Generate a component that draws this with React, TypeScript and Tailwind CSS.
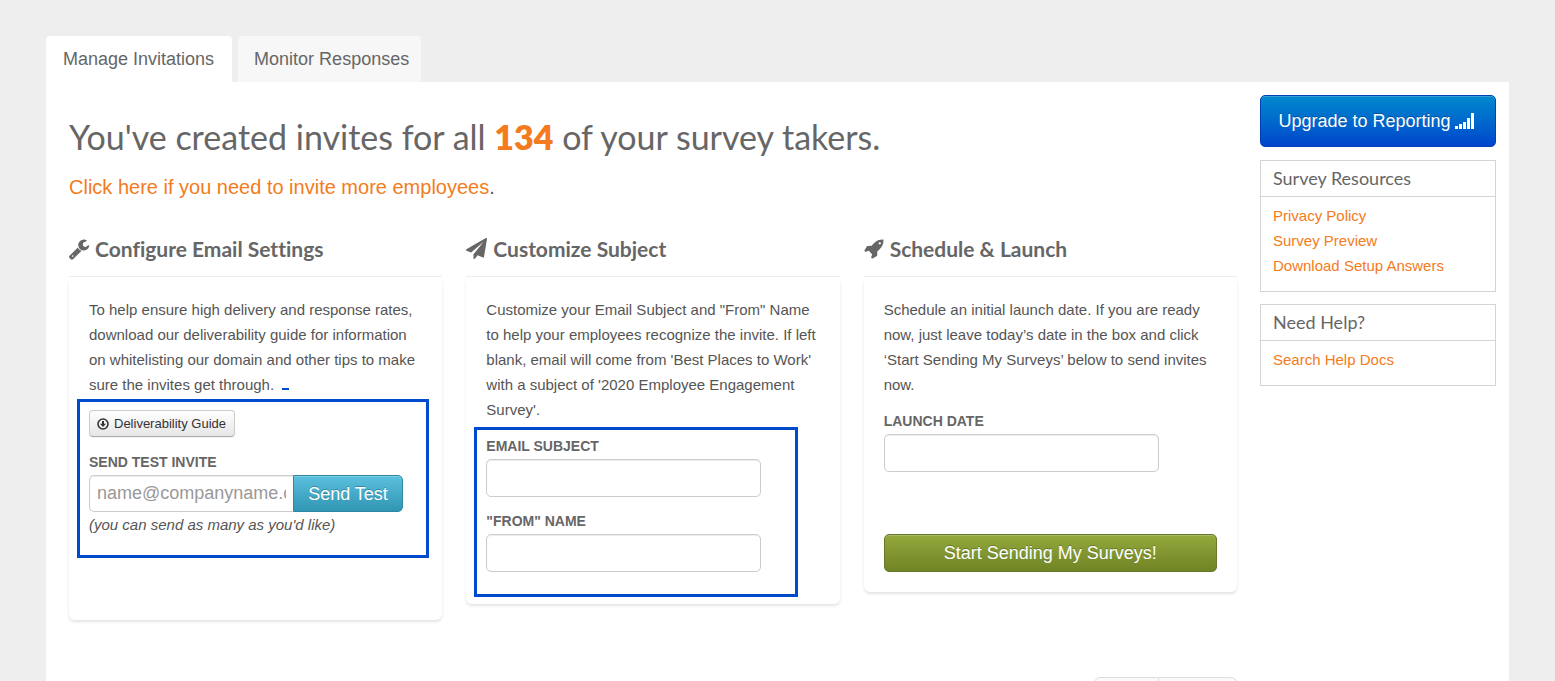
import type { ReactNode } from "react";

const sans = "font-['Liberation_Sans',Arial,sans-serif]";
const lato = "font-['Lato',sans-serif] [font-variant-ligatures:none]";

function Glyph({ d, className }: { d: string; className: string }) {
  return (
    <svg viewBox="0 0 1792 1792" fill="currentColor" aria-hidden="true" className={className}>
      <path d={d} />
    </svg>
  );
}

const WRENCH =
  "M448 1472q0-26-19-45t-45-19-45 19-19 45 19 45 45 19 45-19 19-45zm644-420l-682 682q-37 37-90 37-52 0-91-37l-106-108q-38-36-38-90 0-53 38-91l681-681q39 98 114.5 173.5t173.5 114.5zm634-435q0 39-23 106-47 134-164.5 217.5t-258.5 83.5q-185 0-316.5-131.5t-131.5-316.5 131.5-316.5 316.5-131.5q58 0 121.5 16.5t107.5 46.5q16 11 16 28t-16 28l-293 169v224l193 107q5-3 79-48.5t135.5-81 70.5-35.5q15 0 23.5 10t8.5 25z";
const PLANE =
  "M1764 11q33 24 27 64l-256 1536q-5 29-32 45-14 8-31 8-11 0-24-5l-453-185-242 295q-18 23-49 23-13 0-22-4-19-7-30.5-23.5t-11.5-36.5v-349l864-1059-1069 925-395-162q-37-14-40-55-2-40 32-59l1664-960q15-9 32-9 20 0 36 11z";
const ROCKET =
  "M1440 448q0-40-28-68t-68-28-68 28-28 68 28 68 68 28 68-28 28-68zm224-288q0 249-75.5 430.5t-253.5 360.5q-81 80-195 176l-20 379q-2 16-16 26l-384 224q-7 4-16 4-12 0-23-9l-64-64q-13-14-8-32l85-276-281-281-276 85q-3 1-9 1-14 0-23-9l-64-64q-17-19-5-39l224-384q10-14 26-16l379-20q96-114 176-195 188-187 358-258t431-71q14 0 24 9.5t10 22.5z";

function SignalIcon() {
  return (
    <svg viewBox="0 0 19 16" fill="currentColor" aria-hidden="true" className="h-4 w-[19px]">
      <rect x="0" y="13" width="3" height="3" />
      <rect x="4" y="11" width="3" height="5" />
      <rect x="8" y="9" width="3" height="7" />
      <rect x="12" y="5" width="3" height="11" />
      <rect x="16" y="0" width="3" height="16" />
    </svg>
  );
}

function CircleDownIcon() {
  return (
    <svg viewBox="0 0 12 12" aria-hidden="true" className="size-3">
      <circle cx="6" cy="6" r="5" fill="none" stroke="currentColor" strokeWidth="1.6" />
      <path d="M5 3h2v2.800h2L6 9 3 5.800h2z" fill="currentColor" />
    </svg>
  );
}

function Step({ icon, title, children }: { icon: ReactNode; title: string; children: ReactNode }) {
  return (
    <section>
      <h2 className={`${lato} flex h-[54px] items-center gap-[5px] border-b border-[#eee] pb-0.5 text-[21px] font-bold text-[#666]`}>
        {icon}
        {title}
      </h2>
      <div className="flow-root rounded-md px-5 pt-5 shadow-[0_2px_3px_rgba(0,0,0,0.11)]">{children}</div>
    </section>
  );
}

function Field({ id, label }: { id: string; label: string }) {
  return (
    <div>
      <FieldLabel id={id}>{label}</FieldLabel>
      <input
        id={id}
        type="text"
        className="block h-[38px] w-[275px] max-w-full rounded-[5px] border border-[#ccc] bg-white px-2 text-lg shadow-[inset_0_1px_1px_rgba(0,0,0,0.075)]"
      />
    </div>
  );
}

function FieldLabel({ id, children }: { id: string; children: ReactNode }) {
  return (
    <label htmlFor={id} className="block text-sm leading-[25px] font-bold text-[#666] uppercase">
      {children}
    </label>
  );
}

function SideBox({ title, links }: { title: string; links: string[] }) {
  return (
    <section className="border border-[#d4d4d4]">
      <h3 className={`${lato} h-9 border-b border-[#d4d4d4] px-3 text-lg leading-[34px] text-[#666]`}>{title}</h3>
      <ul className="px-3 pt-1.5 pb-[13px]">
        {links.map((l) => (
          <li key={l}>
            <a href="#" className="text-[#f47b20]">{l}</a>
          </li>
        ))}
      </ul>
    </section>
  );
}

export default function App() {
  return (
    <div className={`${sans} flex h-screen flex-col overflow-hidden bg-[#eee] px-[46px] pt-9 text-[15px] leading-[25px] text-[#555]`}>
      <nav className="flex h-[46px] shrink-0 gap-1.5 text-lg leading-[46px] text-[#666]">
        <a href="#" className="rounded-t bg-white pr-[18px] pl-[17px]">Manage Invitations</a>
        <a href="#" className="rounded-t bg-[#f7f7f7] pr-3 pl-4">Monitor Responses</a>
      </nav>
      <div className="flex flex-1 gap-[23px] bg-white pr-[13px] pl-[23px]">
        <main className="flex min-w-0 flex-1 flex-col">
          <h1 className={`${lato} pt-[31px] text-[34px] leading-[48px] text-[#666] [font-variant-ligatures:normal]`}>
            You've created invites for all <strong className="font-extrabold text-[#f47b20]">134</strong> of your survey takers.
          </h1>
          <p className="pt-[13px] pb-[23px] text-xl leading-[26px]">
            <a href="#" className="text-[#f47b20]">Click here if you need to invite more employees</a>.
          </p>
          <div className="grid h-[454px] shrink-0 grid-cols-3 items-start gap-6">
            <Step icon={<Glyph d={WRENCH} className="-ml-px size-[22px]" />} title="Configure Email Settings">
              <p>
                To help ensure high delivery and response rates, download our deliverability guide for information on
                whitelisting our domain and other tips to make sure the invites get through.
                <span className="ml-2 inline-block h-0.5 w-[7px] bg-[#004bcd]" />
              </p>
              <div className="mt-0.5 -mr-[7px] mb-[62px] -ml-3 h-[159px] border-3 border-[#004bcd] px-[9px] pt-2">
                <button className="flex h-[27px] items-center gap-[5px] rounded border border-[#ccc] border-b-[#a9a9a9] bg-linear-to-b from-white to-[#e6e6e6] px-[7px] pr-2 text-[13px] text-[#333] shadow-[0_1px_2px_rgba(0,0,0,0.05)]">
                  <CircleDownIcon />
                  Deliverability Guide
                </button>
                <div className="mt-[13px]">
                  <FieldLabel id="test-invite">Send Test Invite</FieldLabel>
                  <div className="flex">
                    <input
                      id="test-invite"
                      type="email"
                      placeholder="name@companyname.com"
                      className="h-[37px] w-[204px] min-w-0 rounded-l-[5px] border border-r-0 border-[#ccc] px-[7px] text-lg shadow-[inset_0_1px_1px_rgba(0,0,0,0.075)] placeholder:text-[#999]"
                    />
                    <button className="h-[37px] w-[110px] rounded-r-[5px] border border-[#2f87a3] bg-linear-to-b from-[#5bc0de] to-[#2f96b4] text-lg text-white shadow-[inset_0_1px_0_rgba(255,255,255,0.2)] text-shadow-[0_-1px_0_rgba(0,0,0,0.25)]">
                      Send Test
                    </button>
                  </div>
                  <em>(you can send as many as you'd like)</em>
                </div>
              </div>
            </Step>
            <Step icon={<Glyph d={PLANE} className="mr-px size-[21px]" />} title="Customize Subject">
              <p>
                Customize your Email Subject and "From" Name to help your employees recognize the invite. If left blank,
                email will come from 'Best Places to Work' with a subject of '2020 Employee Engagement Survey'.
              </p>
              <div className="mt-[5px] mr-[22px] mb-[7px] -ml-3 flex h-[170px] flex-col gap-3 border-3 border-[#004bcd] px-[9px] pt-1">
                <Field id="subject" label="Email Subject" />
                <Field id="from" label={'"From" Name'} />
              </div>
            </Step>
            <Step icon={<Glyph d={ROCKET} className="size-[21px]" />} title="Schedule &amp; Launch">
              <p>
                Schedule an initial launch date. If you are ready now, just leave today’s date in the box and click
                ‘Start Sending My Surveys’ below to send invites now.
              </p>
              <div className="pt-3 pb-5">
                <Field id="launch" label="Launch Date" />
                <button className="mt-[62px] h-[38px] w-full rounded-[5px] border border-[#66782b] bg-linear-to-b from-[#93a93d] to-[#708424] text-lg text-white shadow-[inset_0_1px_0_rgba(255,255,255,0.2)] text-shadow-[0_-1px_0_rgba(0,0,0,0.25)]">
                  Start Sending My Surveys!
                </button>
              </div>
            </Step>
          </div>
          <div className="flex shrink-0 self-end">
            <button aria-label="Previous" className="h-8 w-[65px] rounded-l-md border border-[#ddd] bg-[#fafafa]" />
            <button aria-label="Next" className="h-8 w-[78px] rounded-r-md border border-l-0 border-[#ddd] bg-[#fafafa]" />
          </div>
        </main>
        <aside className="flex w-[236px] shrink-0 flex-col gap-3 pt-[13px]">
          <button className="mb-px flex h-13 items-center justify-center gap-1 rounded-[5px] border border-[#0040b5] bg-linear-to-b from-[#0088cc] to-[#0044cc] pr-1 text-lg text-white shadow-[inset_0_1px_0_rgba(255,255,255,0.2)] text-shadow-[0_-1px_0_rgba(0,0,0,0.25)]">
            Upgrade to Reporting
            <SignalIcon />
          </button>
          <SideBox title="Survey Resources" links={["Privacy Policy", "Survey Preview", "Download Setup Answers"]} />
          <SideBox title="Need Help?" links={["Search Help Docs"]} />
        </aside>
      </div>
    </div>
  );
}
